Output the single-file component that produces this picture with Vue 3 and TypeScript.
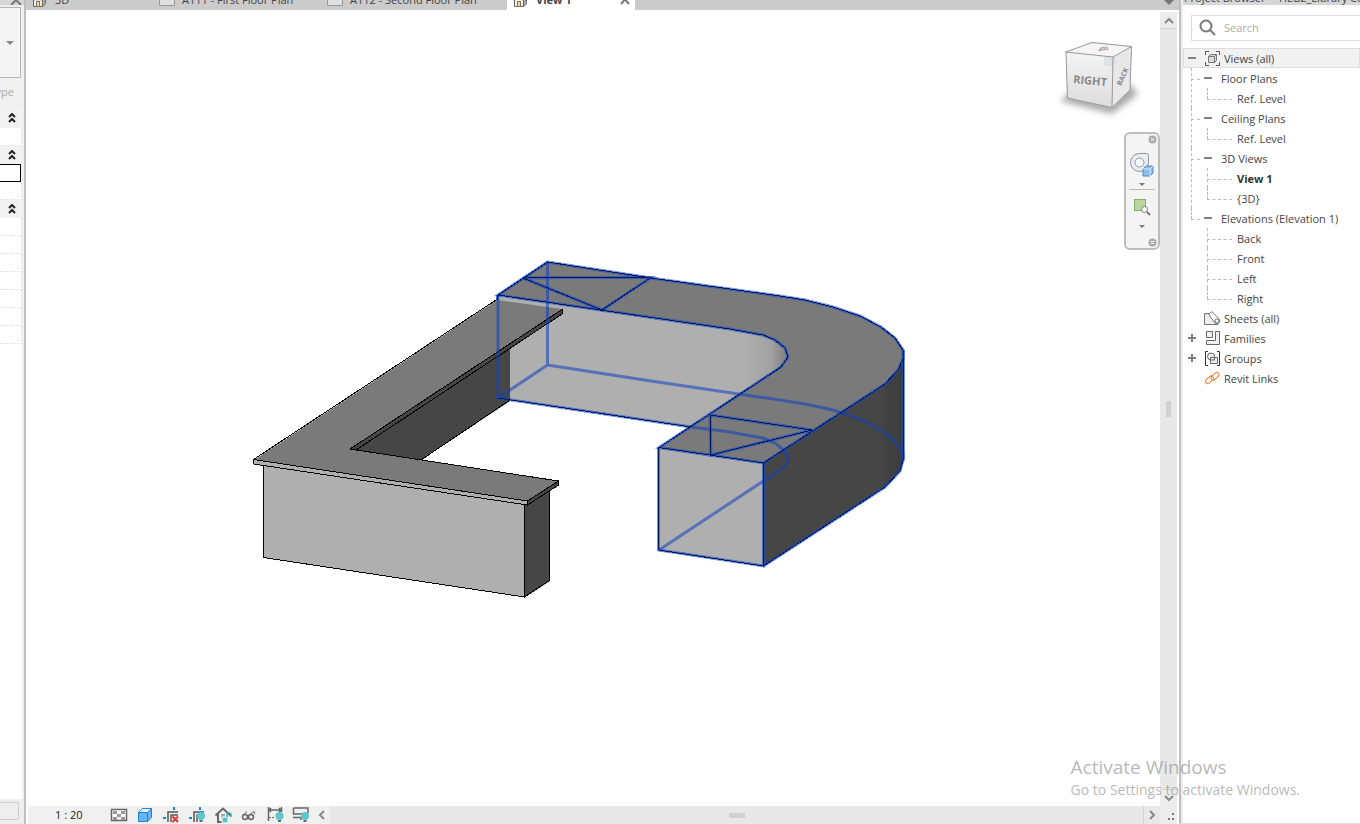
<script setup lang="ts">
import { ref } from 'vue'

interface Branch { label: string; leaves: string[] }
interface Root { label: string; icon: string; toggle: string; branches: Branch[] }

const tabs = [
  { label: '3D', kind: 'home', size: 'short' },
  { label: 'A111 - First Floor Plan', kind: 'sheet', size: 'medium' },
  { label: 'A112 - Second Floor Plan', kind: 'sheet', size: 'long' },
  { label: 'View 1', kind: 'home', size: 'active' },
]

const roots: Root[] = [
  {
    label: 'Views (all)', icon: 'views', toggle: 'minus', branches: [
      { label: 'Floor Plans', leaves: ['Ref. Level'] },
      { label: 'Ceiling Plans', leaves: ['Ref. Level'] },
      { label: '3D Views', leaves: ['View 1', '{3D}'] },
      { label: 'Elevations (Elevation 1)', leaves: ['Back', 'Front', 'Left', 'Right'] },
    ],
  },
  { label: 'Sheets (all)', icon: 'sheets', toggle: 'none', branches: [] },
  { label: 'Families', icon: 'families', toggle: 'plus', branches: [] },
  { label: 'Groups', icon: 'groups', toggle: 'plus', branches: [] },
  { label: 'Revit Links', icon: 'links', toggle: 'none', branches: [] },
]

const tools = ['Detail level', 'Visual style', 'Crop view', 'Show crop region', 'Lock 3D view', 'Temporary hide', 'Reveal constraints', 'Preview visibility']
const query = ref('')
const value = ref('')

const outerTop = 'L651 278 L780 296 L805 300 L833 307 L860 316 L881 327 L895 338 L903 350 L903 359 L898 370 L885 384'
const innerTop = 'L781 367 L788 357 L785 348 L775 340 L763 335 L746 332 L730 329'
</script>

<template>
  <div class="app">
    <aside class="props" aria-label="Properties">
      <div class="props-title">
        <svg width="12" height="8" viewBox="0 0 12 8"><path d="M1 8 L6 3 L11 8" /></svg>
      </div>
      <button class="type-box" aria-label="Type selector"><i class="caret"></i></button>
      <div class="edit-type">ype</div>
      <button class="group tall" aria-label="Collapse group"><svg width="8" height="10" viewBox="0 0 8 10"><path d="M1 4 L4 1 L7 4 M1 9 L4 6 L7 9" /></svg></button>
      <div class="cell"></div>
      <button class="group" aria-label="Collapse group"><svg width="8" height="10" viewBox="0 0 8 10"><path d="M1 4 L4 1 L7 4 M1 9 L4 6 L7 9" /></svg></button>
      <input v-model="value" class="cell-input" aria-label="Value" />
      <div class="cell"></div>
      <button class="group" aria-label="Collapse group"><svg width="8" height="10" viewBox="0 0 8 10"><path d="M1 4 L4 1 L7 4 M1 9 L4 6 L7 9" /></svg></button>
      <div v-for="n in 7" :key="n" class="cell"></div>
      <div class="props-space"></div>
      <div class="props-foot"><button class="apply" aria-label="Apply"></button></div>
    </aside>

    <main class="center">
      <nav class="tabs">
        <button v-for="t in tabs" :key="t.label" class="tab" :class="t.size">
          <svg v-if="t.kind === 'home'" class="tab-icon" width="16" height="16" viewBox="0 0 16 16">
            <path d="M10 8 H13.500 V12 L10.500 14.500 Z" fill="#aaa" stroke="#777" />
            <path d="M0 8.500 L5 3 L13 8.500 M1.500 8 V14.500 H10.500 V8" fill="#eee" stroke="#666" />
            <rect x="4.500" y="9.500" width="3" height="5" fill="#ffd75e" stroke="#777" />
          </svg>
          <svg v-else class="tab-icon" width="16" height="16" viewBox="0 0 16 16">
            <path d="M0.500 3.500 H15.500 V13.500 H0.500 Z" fill="#e0e0e0" stroke="#999" />
          </svg>
          <span>{{ t.label }}</span>
          <svg v-if="t.size === 'active'" class="close" width="10" height="10" viewBox="0 0 10 10"><path d="M1 0 L9 9 M9 0 L1 9" /></svg>
        </button>
        <i class="tab-menu"></i>
      </nav>

      <div class="work">
        <section class="viewport" aria-label="3D view">
          <svg class="model" width="100%" height="100%">
            <defs>
              <linearGradient id="inner" gradientUnits="userSpaceOnUse" x1="744" y1="0" x2="788" y2="0">
                <stop offset="0" stop-color="#afafaf" /><stop offset="0.6" stop-color="#a2a2a2" /><stop offset="1" stop-color="#7d7d7d" />
              </linearGradient>
              <linearGradient id="outer" gradientUnits="userSpaceOnUse" x1="880" y1="0" x2="904" y2="0">
                <stop offset="0" stop-color="#464646" /><stop offset="0.4" stop-color="#404040" /><stop offset="1" stop-color="#3c3c3c" />
              </linearGradient>
            </defs>
            <g transform="translate(-26 -10)">
              <path d="M498 295 L602 310 L730 329 L746 332 L763 335 L775 340 L785 348 L788 357 L781 367 L691 427 L498 398 Z" fill="url(#inner)" />
              <g>
                <path d="M350 449 L510 344 V401 L421 460 Z" fill="#464646" />
                <path d="M254 460 L497 300 L562 309 L350 449 L559 481 L527 502 Z" fill="#7a7a7a" />
                <path d="M350 449 L562 309 V314 L357 450 Z" fill="#464646" />
                <path d="M264 465 L525 504 V597 L264 558 Z" fill="#afafaf" />
                <path d="M525 504 L550 488 V581 L525 597 Z" fill="#464646" />
                <path d="M254 460 L527 501 V505 L254 464 Z" fill="#afafaf" />
                <path d="M527 501 L559 481 V485 L527 505 Z" fill="#464646" />
                <path class="edge" d="M497.500 299 L253.500 459.500 V464 L527.500 505 L558.500 485 V481 L350 449 L562 309.500 V314 L356 450 M253.500 459.500 L527.500 501 V505 M527.500 501 L558.500 481 M263.500 466 V557.500 L524.500 597 V505 M524.500 597 L549.500 580.500 V491 M421 460 L510 400" />
              </g>
              <path d="M764 463 L885 384 L898 370 L904 358 V458 L901 470 L885 487 L764 566 Z" fill="url(#outer)" />
              <path d="M659 448 L764 463 V566 L659 551 Z" fill="#afafaf" />
              <path :d="`M547 262 ${outerTop} L764 463 L659 448 ${innerTop} L498 295 Z`" fill="#7a7a7a" />
              <path class="hidden" d="M547.500 262 V365 L498 398 V296 M547.500 365 L651 381 L780 400 L805 404 L833 410 L860 419 L881 430 L895 441 L903 453 V461 M691 427 L730 432 L746 435 L763 438 L775 443 L785 451 L788 457 L786 465 L780 470 L659 550" />
              <g v-for="layer in ['halo', 'core']" :key="layer" :class="layer">
                <path :d="`M547.500 262 ${outerTop} L763.500 463 L659 447.500 ${innerTop} L498 295 Z`" />
                <path d="M523 278 L558 277.500 H651 L602 310 L523 278 M710 415 L812 430 L711 455 Z" />
                <path d="M658.500 448 V550 L763.500 566 V463 M763.500 566 L885 487 L900 471 L903.500 458 V350 M498 398 L691 427 M497.500 295 V300" />
              </g>
            </g>
          </svg>

          <svg class="cube" width="90" height="86" viewBox="1054 34 90 86" aria-label="View cube">
            <defs>
              <filter id="soft" x="-20%" y="-50%" width="140%" height="200%"><feGaussianBlur stdDeviation="3" /></filter>
              <linearGradient id="face" x1="0" y1="0" x2="0" y2="1"><stop offset="0" stop-color="#f4f4f4" /><stop offset="1" stop-color="#dcdcdc" /></linearGradient>
            </defs>
            <path d="M1060 101 L1112 114 L1138 94 L1130 84 L1068 94 Z" fill="#aaa" filter="url(#soft)" />
            <path d="M1066 52 L1092 42 L1132 46 L1113 57 Z" fill="#f5f5f5" />
            <path d="M1066 52 L1113 57 L1112 108 L1067 98 Z" fill="url(#face)" />
            <path d="M1113 57 L1132 46 L1130 90 L1112 108 Z" fill="#e8e8e8" />
            <path d="M1104 56 L1113 57 L1116 55 V64 L1113 67 L1104 65 Z" fill="#dde1e8" />
            <path d="M1065.500 52 L1092 42.500 L1131.500 46.500 L1113 57 Z M1066 52 L1067.500 98 L1112 107.500 L1113 57 M1112 107.500 L1130 90 L1131.500 46.500" fill="none" stroke="#999" />
            <text x="1073" y="83" class="cube-text" transform="rotate(5 1073 83)">RIGHT</text>
            <text x="1121" y="86" class="cube-small" transform="rotate(-66 1121 86)">BACK</text>
            <text x="1108" y="46" class="cube-top" transform="rotate(170 1108 46)">TOP</text>
          </svg>

          <div class="navbar">
            <button class="nav-mini" aria-label="Close navigation bar"><svg width="9" height="9" viewBox="0 0 9 9"><circle cx="4.500" cy="4.500" r="4" fill="#aaa" /><path d="M3 3 L6 6 M6 3 L3 6" stroke="#fff" /></svg></button>
            <button class="nav-tool wheel" aria-label="Steering wheel">
              <svg width="26" height="26" viewBox="0 0 26 26">
                <path d="M10.500 1.500 H17.500 Q19.500 1.500 19.500 3.500 V10.500 A9 9 0 1 1 10.500 1.500 Z" fill="#e9edf2" stroke="#8d97a3" />
                <circle cx="10.500" cy="10.500" r="4.500" fill="#f6f7f9" stroke="#8d97a3" />
                <path d="M14 17 L17 14 H24 V21 L21 24 H14 Z" fill="#8fbde9" stroke="#5587bd" />
                <path d="M14 17 H21 V24 M21 17 L24 14" fill="none" stroke="#d2e6fa" />
              </svg>
            </button>
            <i class="nav-caret"></i>
            <hr />
            <button class="nav-tool region" aria-label="Zoom in region">
              <svg width="18" height="18" viewBox="0 0 18 18">
                <rect x="1.500" y="1.500" width="11" height="11" fill="#b9d7a1" stroke="#86ad6d" />
                <circle cx="11.500" cy="11.500" r="3" fill="#fff" stroke="#777" /><path d="M14 14 L17 17" stroke="#777" stroke-width="2" />
              </svg>
            </button>
            <i class="nav-caret"></i>
            <button class="nav-mini last" aria-label="Navigation bar options"><svg width="9" height="9" viewBox="0 0 9 9"><circle cx="4.500" cy="4.500" r="4" fill="#aaa" /><path d="M2.500 3.500 H6.500 M3 5.500 H6" stroke="#fff" /></svg></button>
          </div>
        </section>

        <div class="vscroll">
          <button class="sbtn top" aria-label="Scroll up"><svg width="10" height="7" viewBox="0 0 10 7"><path d="M1 6 L5 2 L9 6" /></svg></button>
          <div class="track"><i></i></div>
          <button class="sbtn" aria-label="Scroll down"><svg width="10" height="7" viewBox="0 0 10 7"><path d="M1 1 L5 5 L9 1" /></svg></button>
        </div>
      </div>

      <footer class="status">
        <button class="scale">1 : 20</button>
        <div class="tools">
          <button v-for="(name, i) in tools" :key="name" class="tool" :aria-label="name">
            <svg width="18" height="18" viewBox="0 0 18 18" fill="none" stroke="#666">
              <g v-if="i === 0">
                <rect x="1.500" y="3.500" width="15" height="11" fill="#fff" stroke-width="1.500" />
                <path d="M3 5 H7 V8 H3 Z M11 5 H15 V8 H11 Z M7 8 H11 V11 H7 Z M3 11 H7 V14 H3 Z M11 11 H15 V14 H11 Z" fill="#999" stroke="none" />
              </g>
              <g v-else-if="i === 1" stroke="#1686dc">
                <path d="M2.500 6.500 L6.500 2.500 H15.500 V11.500 L11.500 15.500 H2.500 Z" fill="#68b5f2" />
                <path d="M2.500 6.500 L6.500 2.500 H15.500 L11.500 6.500 Z" fill="#e8f5ff" /><path d="M11.500 6.500 V15.500" />
              </g>
              <g v-else-if="i === 2 || i === 3">
                <path d="M6 16 V6 H16 M9 16 V9 H16" stroke="#555" stroke-width="1.500" />
                <path d="M1 12 H4 M12 1 V4" stroke="#1686dc" stroke-width="2" />
                <path v-if="i === 2" d="M10.500 10.500 L16 16 M16 10.500 L10.500 16" stroke="#ec3131" stroke-width="2" />
                <g v-else stroke="none"><circle cx="13" cy="10" r="4" fill="#5bc7cf" /><path d="M11.500 14 H14.500 V16 H11.500 Z" fill="#666" /></g>
              </g>
              <g v-else-if="i === 4">
                <path d="M1.500 9.500 L9 2.500 L16.500 9.500 M4 8 V16 H8" stroke-width="2" /><path d="M7 8 H11 V12 H7 Z" fill="#aaa" stroke="none" />
                <path d="M8 11 H14 V17 H8 Z" fill="#54c4cc" stroke="#fff" /><path d="M13 11 V9 A2 2 0 0 1 17 9 V11" stroke="#35aeb8" stroke-width="1.500" />
              </g>
              <g v-else-if="i === 5">
                <circle cx="5" cy="11" r="2.500" stroke-width="1.500" /><circle cx="11" cy="11" r="2.500" stroke-width="1.500" /><path d="M3 9 L7 5.500 M10 8.500 L14 5.500 L15 8 M7 10 H9" />
              </g>
              <g v-else-if="i === 6">
                <path d="M2.500 1 V15 M15.500 1 V6 M3 4 H15 M5 2 L3 4 L5 6 M13 2 L15 4 L13 6" stroke-width="1.500" />
                <path d="M3 11.500 H9" stroke-dasharray="2 1" /><circle cx="13.500" cy="10" r="4" fill="#5bc7cf" stroke="none" /><path d="M12 14 H15 V16 H12 Z" fill="#666" stroke="none" />
              </g>
              <g v-else>
                <path d="M1.500 2 H16 V7 M1.500 2 V8 H10 M1 11.500 H9 V14" stroke-width="1.500" />
                <circle cx="13" cy="10" r="4" fill="#5bc7cf" stroke="none" /><path d="M11.500 14 H14.500 V16 H11.500 Z" fill="#666" stroke="none" />
              </g>
            </svg>
          </button>
        </div>
        <button class="hbtn" aria-label="Scroll left"><svg width="7" height="10" viewBox="0 0 7 10"><path d="M6 1 L2 5 L6 9" /></svg></button>
        <div class="htrack"><i></i></div>
        <button class="hbtn right" aria-label="Scroll right"><svg width="7" height="10" viewBox="0 0 7 10"><path d="M1 1 L5 5 L1 9" /></svg></button>
        <div class="grip"><svg width="8" height="8" viewBox="0 0 8 8"><path d="M5 0 H7 V2 H5 Z M5 5 H7 V7 H5 Z M1 5 H3 V7 H1 Z" /></svg></div>
      </footer>
    </main>

    <aside class="browser">
      <div class="browser-title"><span>Project Browser</span><span>-</span><span>HEB2_Library Co</span></div>
      <label class="search">
        <svg width="18" height="18" viewBox="0 0 18 18"><circle cx="7" cy="7" r="5.500" /><path d="M11 11 L16 16" /></svg>
        <input v-model="query" type="text" placeholder="Search" aria-label="Search" />
      </label>
      <ul class="tree">
        <li v-for="r in roots" :key="r.label">
          <button class="row root" :class="{ selected: r.icon === 'views' }">
            <i class="toggle" :class="r.toggle"></i>
            <svg width="18" height="18" viewBox="0 0 18 18" fill="none" stroke="#777">
              <g v-if="r.icon === 'views'">
                <path d="M1.500 5 V1.500 H5 M12 1.500 H15.500 V5 M15.500 12 V15.500 H12 M5 15.500 H1.500 V12" stroke="#555" />
                <path d="M4.500 6.500 L6.500 4.500 H12.500 V10.500 L10.500 12.500 H4.500 Z" fill="#ddd" /><path d="M4.500 6.500 H10.500 V12.500 M10.500 6.500 L12.500 4.500" />
              </g>
              <g v-else-if="r.icon === 'sheets'">
                <path d="M0.500 3.500 H7 L14 10 V14.500 H0.500 Z" fill="#eee" />
                <path d="M5 4 L8 1.500 L15 9 A2.500 2.500 0 0 1 11 13 L5 5 Z" fill="#fff" /><circle cx="13" cy="11" r="2" />
              </g>
              <g v-else-if="r.icon === 'families'" stroke="#666">
                <path d="M2.500 1.500 H8.500 V7.500 H2.500 Z M11.500 1.500 H15.500 V14.500 H2.500 V10.500 H11.500 Z" fill="#f0f0f0" />
              </g>
              <g v-else-if="r.icon === 'groups'" stroke="#666">
                <path d="M4 1.500 H1.500 V15.500 H4 M13 1.500 H15.500 V15.500 H13" stroke="#333" />
                <circle cx="7" cy="6.500" r="3.500" fill="#eee" /><path d="M6.500 7.500 H13.500 V13.500 H6.500 Z" fill="#eee" /><path d="M6.500 10 H10.500 V7.500" />
              </g>
              <g v-else stroke="#ed7d31">
                <rect x="1" y="7.500" width="9" height="4.500" rx="2.200" transform="rotate(-42 5.500 9.800)" /><rect x="6.500" y="4" width="9" height="4.500" rx="2.200" transform="rotate(-42 11 6.200)" />
              </g>
            </svg>
            <span>{{ r.label }}</span>
          </button>
          <ul v-if="r.branches.length" class="branches">
            <li v-for="b in r.branches" :key="b.label">
              <button class="row branch"><i class="toggle minus"></i><span>{{ b.label }}</span></button>
              <ul class="leaves">
                <li v-for="leaf in b.leaves" :key="leaf"><button class="row leaf" :class="{ current: leaf === 'View 1' }">{{ leaf }}</button></li>
              </ul>
            </li>
          </ul>
        </li>
      </ul>
    </aside>

    <div class="watermark"><strong>Activate Windows</strong><span>Go to Settings to activate Windows.</span></div>
  </div>
</template>

<style>
body { margin: 0; overflow: hidden; }
</style>

<style scoped>
.app {
  position: relative;
  display: grid;
  grid-template-columns: 26px minmax(0, 1fr) 181px;
  min-height: 100vh;
  background: #fff;
  color: #444;
  font: 11px/20px "Open Sans", "Noto Sans", sans-serif;
}
.app * { box-sizing: border-box; }
button, input { margin: 0; padding: 0; border: 0; background: none; font: inherit; color: inherit; text-align: left; }
button { display: flex; align-items: center; cursor: default; }
svg { display: block; flex: none; }
ul { margin: 0; padding: 0; list-style: none; }

.props { display: flex; flex-direction: column; overflow: hidden; border-right: 2px solid #bfbfbf; background: #f0f0f0; }
.props-title { display: flex; height: 5px; padding-left: 10px; overflow: hidden; align-items: flex-end; background: #d6d6d6; }
.props-title path { fill: none; stroke: #777; stroke-width: 2; }
.type-box { width: 21px; height: 71px; margin-top: 2px; padding-left: 6px; border: 1px solid #b5b5b5; border-left: 0; background: #f4f4f4; }
.caret { border: 4px solid transparent; border-top-color: #888; border-bottom: 0; }
.edit-type { display: flex; justify-content: flex-end; width: 14px; height: 30px; padding-top: 4px; color: #aaa; }
.group { width: 22px; height: 18px; padding-left: 8px; background: #f2f2f2; }
.group.tall { height: 20px; }
.group path { fill: none; stroke: #222; stroke-width: 2; }
.cell { width: 22px; height: 18px; border-right: 1px dotted #ddd; border-bottom: 1px dotted #ddd; background: #fff; }
.cell-input { width: 21px; height: 18px; border: 1px solid #000; border-left: 0; background: #fff; }
.props-space { flex: 1; width: 22px; background: #fff; }
.props-foot { height: 25px; padding-top: 3px; background: #eee; }
.apply { width: 19px; height: 18px; border: 1px solid #ccc; border-left: 0; border-radius: 0 2px 2px 0; }

.center { display: flex; flex-direction: column; min-width: 0; }
.tabs { display: flex; height: 10px; align-items: flex-end; overflow: hidden; background: #cbcbcb; }
.tab { height: 18px; padding: 0 0 0 6px; gap: 7px; color: #444; }
.tab.short, .tab.active { height: 20px; }
.tab.short { width: 127px; }
.tab.medium { width: 168px; height: 20px; }
.tab.long { width: 186px; height: 20px; }
.tab.active { width: 128px; background: #fff; font-weight: 700; }
.close { margin-left: auto; margin-right: 5px; }
.close path { stroke: #777; stroke-width: 2; }
.tab-menu { margin: 0 5px 5px auto; border: 5px solid transparent; border-top-color: #777; border-bottom: 0; }

.work { display: flex; flex: 1; min-height: 0; padding-right: 2px; }
.viewport { position: relative; flex: 1; min-width: 0; overflow: hidden; background: #fff; }
.model { position: absolute; inset: 0; }
.edge { fill: none; stroke: #000; stroke-width: 1; shape-rendering: crispEdges; }
.hidden { fill: none; stroke: rgb(16 64 190 / 0.56); stroke-width: 3; }
.halo { fill: none; stroke: rgb(16 72 200 / 0.6); stroke-width: 3; }
.core { fill: none; stroke: #001a68; stroke-width: 1; shape-rendering: crispEdges; }
.cube { position: absolute; top: 24px; right: 16px; }
.cube text { fill: #888; font-weight: 700; }
.cube-text { font-size: 11px; }
.cube-small { font-size: 7px; }
.cube-top { font-size: 5px; }
.navbar { position: absolute; top: 122px; right: 0; display: flex; flex-direction: column; align-items: center; width: 36px; height: 118px; border: 2px solid #bdbdbd; border-radius: 6px; background: #f4f4f4; }
.nav-mini { align-self: flex-end; margin: 1px 1px 0 0; }
.nav-mini.last { margin: auto 1px 1px 0; }
.nav-tool.wheel { margin: 8px 0 5px; }
.nav-tool.region { margin: 8px 0 9px; }
.nav-caret { border: 3px solid transparent; border-top-color: #777; border-bottom: 0; }
.navbar hr { width: 26px; margin: 3px 0 0; border: 0; border-top: 1px solid #bbb; }

.vscroll { display: flex; flex-direction: column; width: 17px; padding-top: 2px; }
.sbtn { height: 17px; justify-content: center; border-top: 1px solid #d4d4d4; background: #ececec; }
.sbtn.top { border-top: 0; border-bottom: 1px solid #d4d4d4; }
.sbtn path, .hbtn path { fill: none; stroke: #888; stroke-width: 2; }
.track { display: flex; flex: 1; align-items: center; justify-content: center; background: #e8e8e8; }
.track i { width: 5px; height: 16px; background: #d0d0d0; }

.status { display: flex; height: 18px; margin: 0 0 0 2px; background: #f0f0f0; border-right: 2px solid #fff; }
.scale { width: 78px; padding-left: 27px; color: #222; }
.tools { display: flex; width: 207px; }
.tool { width: 26px; flex: none; justify-content: center; }
.hbtn { width: 17px; justify-content: center; }
.hbtn.right { border-left: 1px solid #d4d4d4; background: #e8e8e8; }
.htrack { display: flex; flex: 1; align-items: center; justify-content: center; background: #e8e8e8; }
.htrack i { width: 16px; height: 5px; background: #d0d0d0; }
.grip { display: flex; width: 17px; align-items: center; justify-content: flex-end; padding: 3px 2px 0 0; background: #ececec; }
.grip path { fill: #777; }

.browser { min-width: 0; overflow: hidden; border-left: 2px solid #bfbfbf; border-bottom: 1px solid #ddd; box-shadow: inset 2px 0 #eee; padding-left: 2px; }
.browser-title { display: flex; height: 5px; padding-left: 1px; gap: 5px; align-items: flex-end; overflow: hidden; background: #d6d6d6; white-space: nowrap; }
.browser-title span { height: 17px; }
.search { display: flex; height: 26px; margin: 10px 0 7px 8px; padding-left: 7px; align-items: center; gap: 7px; border: 1px solid #ddd; border-right: 0; }
.search svg { fill: none; stroke: #777; stroke-width: 2; }
.search input { width: 100%; min-width: 0; height: 20px; outline: 0; }
.search input::placeholder { color: #aaa; opacity: 1; }
.row { width: 100%; height: 20px; padding-top: 1px; white-space: nowrap; }
.row.root { padding-left: 5px; }
.row.selected { box-shadow: inset 0 0 0 1px #ddd; background: #f1f1f1; }
.root .toggle { margin-right: 7px; }
.root svg { margin-right: 2px; }
.row.branch { padding-left: 21px; gap: 8px; }
.row.leaf { padding-left: 54px; }
.current { font-weight: 700; color: #333; }
.toggle { position: relative; flex: none; width: 9px; height: 9px; }
.minus::before, .plus::before { content: ""; position: absolute; top: 3px; left: 0; width: 8px; height: 2px; background: #808080; }
.plus::after { content: ""; position: absolute; top: 0; left: 3px; width: 2px; height: 8px; background: #808080; }
.tree { padding-top: 1px; margin-top: -1px; }
.branches li { position: relative; }
.branches > li::before { content: ""; position: absolute; top: 0; bottom: 0; left: 8px; border-left: 1px dashed #bbb; }
.branches > li:last-child::before { bottom: auto; height: 11px; }
.branches > li::after { content: ""; position: absolute; top: 11px; left: 8px; width: 9px; border-top: 1px dashed #bbb; }
.leaves li::before { content: ""; position: absolute; top: 0; left: 24px; height: 20px; border-left: 1px dashed #bbb; }
.leaves li:last-child::before { height: 11px; }
.leaves li::after { content: ""; position: absolute; top: 11px; left: 24px; width: 25px; border-top: 1px dashed #bbb; }

.watermark { position: absolute; right: 60px; bottom: 24px; display: flex; flex-direction: column; color: rgb(130 130 130 / 0.58); pointer-events: none; }
.watermark strong { font-size: 19px; line-height: 25px; font-weight: 400; }
.watermark span { font-size: 14px; line-height: 20px; }
</style>
